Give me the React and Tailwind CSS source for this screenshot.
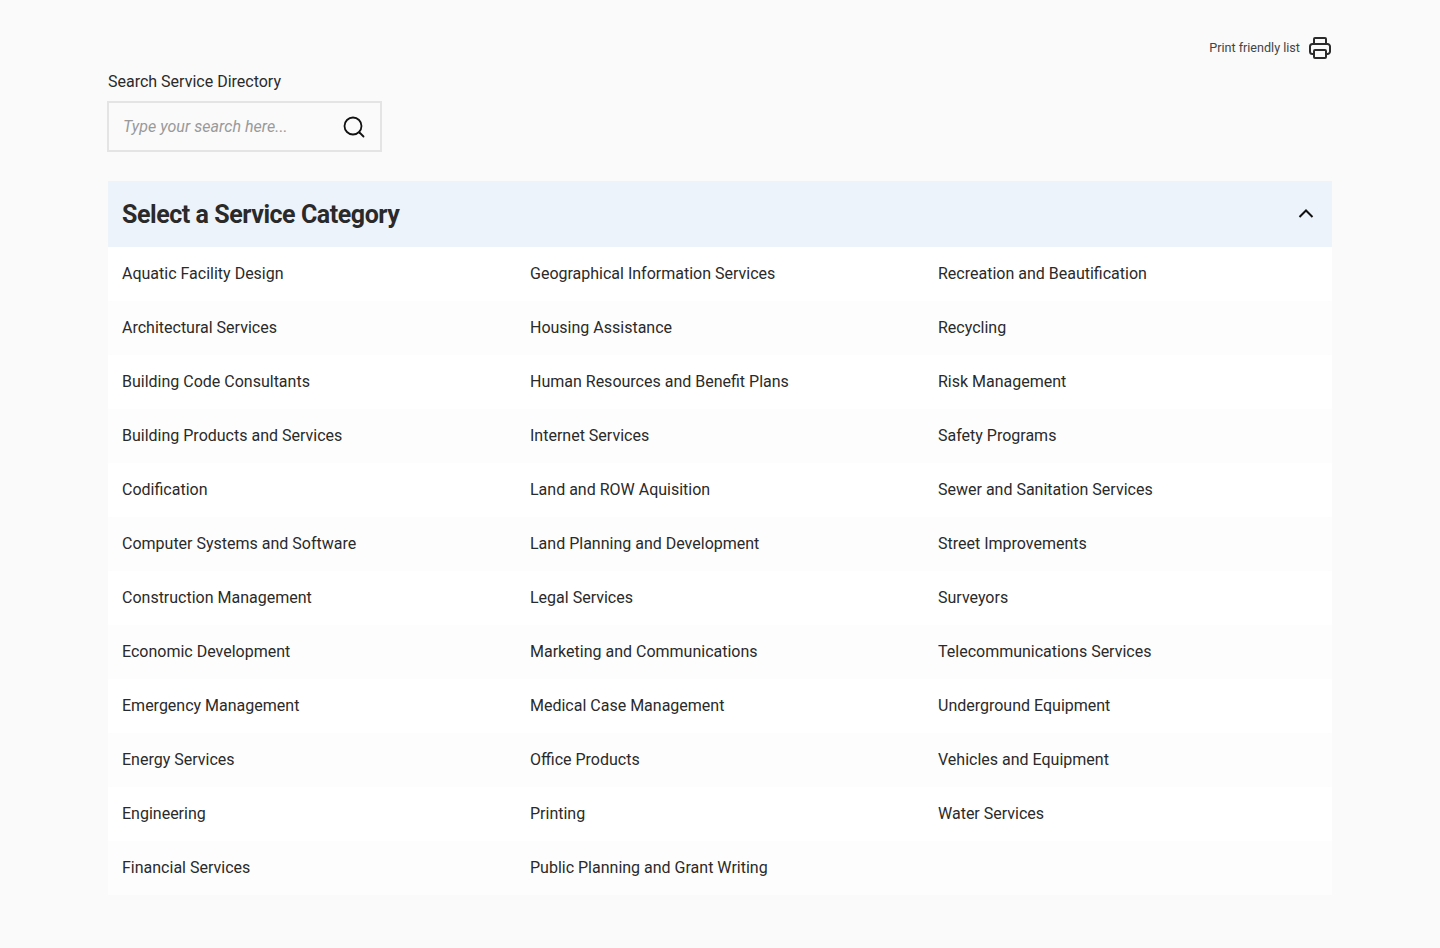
import React from "react";

const rows = [
  ["Aquatic Facility Design", "Geographical Information Services", "Recreation and Beautification"],
  ["Architectural Services", "Housing Assistance", "Recycling"],
  ["Building Code Consultants", "Human Resources and Benefit Plans", "Risk Management"],
  ["Building Products and Services", "Internet Services", "Safety Programs"],
  ["Codification", "Land and ROW Aquisition", "Sewer and Sanitation Services"],
  ["Computer Systems and Software", "Land Planning and Development", "Street Improvements"],
  ["Construction Management", "Legal Services", "Surveyors"],
  ["Economic Development", "Marketing and Communications", "Telecommunications Services"],
  ["Emergency Management", "Medical Case Management", "Underground Equipment"],
  ["Energy Services", "Office Products", "Vehicles and Equipment"],
  ["Engineering", "Printing", "Water Services"],
  ["Financial Services", "Public Planning and Grant Writing", ""],
];

export default function App() {
  return (
    <div className="min-h-[948px] bg-[#fafafa] px-[108px] pt-[36px] font-['Roboto',sans-serif] text-[#2a2a2a]">
      <div className="flex items-center justify-end gap-[9px] h-[24px]">
        <span className="text-[12.6px] pt-px text-[#444]">Print friendly list</span>
        <svg className="mr-px" width="22" height="24" viewBox="0 0 22 24" fill="none" stroke="#2b2b2b" strokeWidth="2" strokeLinejoin="round" strokeLinecap="round">
          <path d="M5 8V3a1 1 0 0 1 1-1h10a1 1 0 0 1 1 1V8" />
          <path d="M5 18H3.500A2.500 2.500 0 0 1 1 15.500v-5A2.500 2.500 0 0 1 3.500 8h15a2.500 2.500 0 0 1 2.500 2.500v5a2.500 2.500 0 0 1-2.500 2.500H17" />
          <rect x="5" y="14" width="12" height="8" rx="1" />
        </svg>
      </div>
      <label className="mt-[10px] block text-[16px] leading-[24px] text-[#2a2a2a]">Search Service Directory</label>
      <div className="mt-[7px] flex h-[51px] w-[275px] -ml-px items-center justify-between border-2 border-[#e4e4e4] pl-[14px] pr-[15px]">
        <span className="text-[16px] tracking-[0.05px] italic text-[#999]">Type your search here...</span>
        <svg width="22" height="22" viewBox="0 0 22 22" fill="none" stroke="#111" strokeWidth="1.8" strokeLinecap="round">
          <circle cx="10" cy="10" r="8.500" />
          <path d="M16.500 16.500L20.500 20.500" />
        </svg>
      </div>
      <div className="mt-[29px]">
        <div className="flex h-[66px] items-center justify-between bg-[#ecf3fa] pl-[14px] pr-[18px]">
          <h2 className="text-[25px] font-bold leading-[36px] tracking-[-0.45px] pt-px text-[#2a2a2a]">Select a Service Category</h2>
          <svg width="16" height="10" viewBox="0 0 16 10" fill="none" stroke="#111" strokeWidth="2">
            <path d="M1.500 8L8 1.500L14.500 8" />
          </svg>
        </div>
        {rows.map((row, i) => (
          <div key={i} className={`grid h-[54px] grid-cols-[408px_408px_1fr] items-center pl-[14px] text-[16px] text-[#2a2a2a] ${i % 2 === 0 ? "bg-white" : "bg-[#fdfdfd]"}`}>
            {row.map((t, j) => (
              <span key={j}>{t}</span>
            ))}
          </div>
        ))}
      </div>
    </div>
  );
}
